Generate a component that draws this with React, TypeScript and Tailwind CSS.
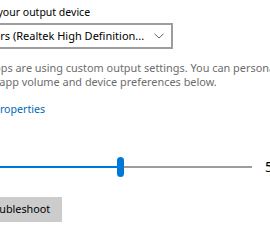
import React from "react";

export default function App() {
  return (
    <div
      className="w-[270px] h-[250px] overflow-hidden bg-white text-black"
      style={{ fontFamily: '"Noto Sans", "Open Sans", sans-serif' }}
    >
      <div className="ml-[-46px] w-[400px] pt-[5px] flex flex-col items-start">
        <div className="ml-[4px] h-[14px] text-[10.5px] leading-[14px] text-[#000] whitespace-nowrap">
          Choose your output device
        </div>
        <div className="mt-[4px] w-[219px] h-[26px] border-2 border-[#9d9d9d] flex items-center justify-between pl-[7px] pr-[7px]">
          <span className="text-[11px] leading-[16px] whitespace-nowrap text-[#000]">
            Speakers (Realtek High Definition...
          </span>
          <svg width="10" height="6" viewBox="0 0 10 6">
            <path d="M0.5 0.8 L5 5 L9.5 0.8" fill="none" stroke="#666" strokeWidth="1" />
          </svg>
        </div>
        <div className="mt-[12px] text-[10.9px] leading-[14px] text-[#6d6d6d] whitespace-nowrap">
          <div className="ml-[-6px]">Certain apps are using custom output settings. You can personalize</div>
          <div className="ml-[2px]">these in app volume and device preferences below.</div>
        </div>
        <a className="mt-[13px] ml-[4px] block text-[10.6px] leading-[14px] text-[#0067b8] whitespace-nowrap">
          Device properties
        </a>
        <div className="mt-[41px] flex items-center h-[20px]">
          <div className="w-[163px] h-[2px] bg-[#0078d7]" />
          <div className="w-[7px] h-[20px] rounded-full bg-[#0078d7]" />
          <div className="w-[128px] h-[2px] bg-[#9d9d9d]" />
          <span className="ml-[13px] text-[14px] leading-[20px] text-[#000]">50</span>
        </div>
        <div className="mt-[18px]">
          <button className="w-[108px] h-[25px] bg-[#cccccc] text-[10.8px] leading-[14px] pl-[29px] text-left text-[#000] whitespace-nowrap">
            Troubleshoot
          </button>
        </div>
      </div>
    </div>
  );
}
